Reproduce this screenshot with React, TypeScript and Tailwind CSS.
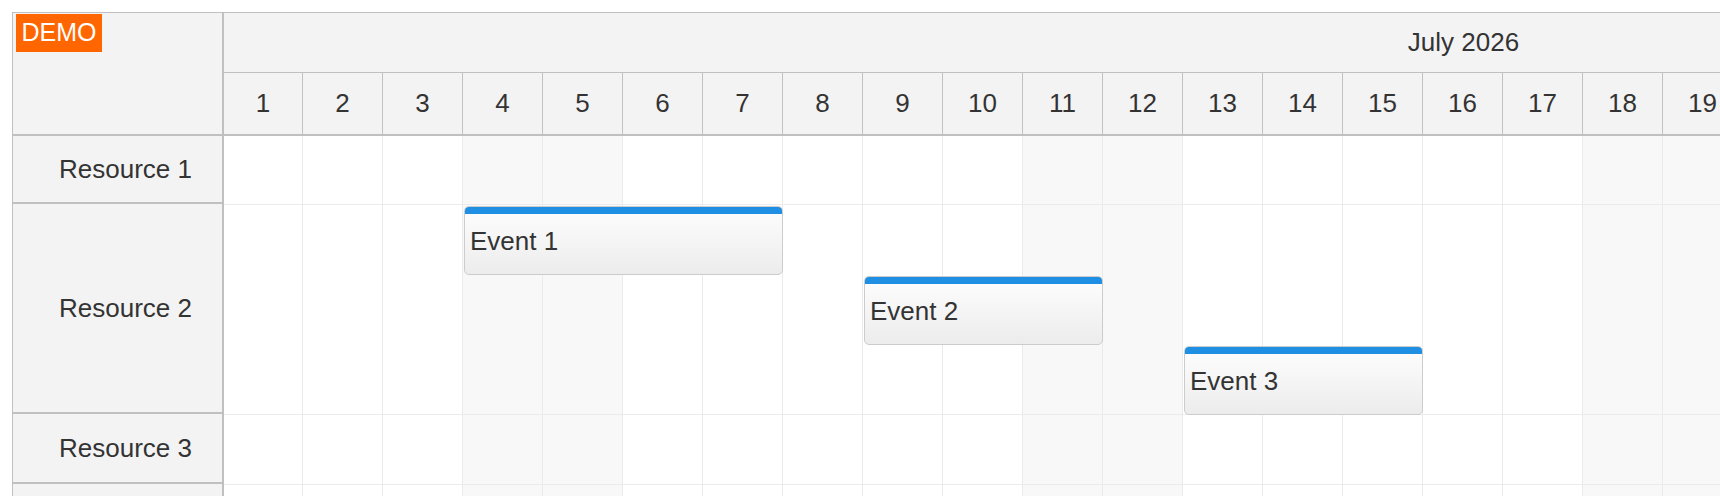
import type { CSSProperties } from "react";

type Resource = { name: string; headerH: string; rowH: string };
type SchedulerEvent = { text: string; start: number; days: number; lane: number };

const DAYS = Array.from({ length: 31 }, (_, i) => i + 1);
// Saturdays and Sundays in July 2026
const WEEKEND = new Set([4, 5, 11, 12, 18, 19, 25, 26]);

const RESOURCES: Resource[] = [
  { name: "Resource 1", headerH: "h-[68px]", rowH: "h-[69px]" },
  { name: "Resource 2", headerH: "h-[210px]", rowH: "h-[210px]" },
  { name: "Resource 3", headerH: "h-[70px]", rowH: "h-[70px]" },
  { name: "Resource 4", headerH: "h-[70px]", rowH: "h-[70px]" },
];

const EVENTS: SchedulerEvent[] = [
  { text: "Event 1", start: 4, days: 4, lane: 0 },
  { text: "Event 2", start: 9, days: 3, lane: 1 },
  { text: "Event 3", start: 13, days: 3, lane: 2 },
];

const CELL_W = 80;
const LANE_H = 70;
// top of Resource 2 inside the grid body (row 1 height)
const ROW2_TOP = 69;

const font = "font-['Liberation_Sans',Arial,sans-serif]";

function EventBox({ ev }: { ev: SchedulerEvent }) {
  const style: CSSProperties = {
    left: (ev.start - 1) * CELL_W,
    width: ev.days * CELL_W - 1,
    top: ROW2_TOP + 1 + ev.lane * LANE_H,
  };
  return (
    <div
      style={style}
      className="absolute z-10 flex h-[69px] items-center overflow-hidden rounded-[5px] border border-[#cccccc] bg-gradient-to-b from-[#fefefe] to-[#ececec] pl-[5px] text-[26px] text-[#333]"
    >
      <div className="absolute top-0 right-0 left-0 h-[7px] bg-[#1f8fe3]" />
      <span className="pt-[2px]">{ev.text}</span>
    </div>
  );
}

function GridRow({ rowH }: { rowH: string }) {
  return (
    <div className={`${rowH} grid grid-cols-[79px_repeat(30,80px)] border-b border-[#ebebeb]`}>
      {DAYS.map((d) => (
        <div
          key={d}
          className={`h-full border-r border-[#ebebeb] ${WEEKEND.has(d) ? "bg-[#f8f8f8]" : "bg-white"}`}
        />
      ))}
    </div>
  );
}

export default function App() {
  return (
    <div className={`h-[496px] w-full overflow-hidden bg-white pt-3 pl-3 ${font}`}>
      <div className="flex border-t border-l border-[#c0c0c0] text-[#333]">
        {/* row headers */}
        <div className="w-[211px] shrink-0 border-r-2 border-[#c0c0c0] bg-[#f3f3f3]">
          <div className="h-[123px] border-b-2 border-[#c0c0c0] pt-px pl-[3px]">
            <div className="flex h-[38px] w-[86px] items-center justify-center bg-[#ff6600] text-[25px] text-white">
              DEMO
            </div>
          </div>
          {RESOURCES.map((r) => (
            <div
              key={r.name}
              className={`${r.headerH} flex items-center border-b-2 border-[#c0c0c0] pl-[46px] text-[26px]`}
            >
              {r.name}
            </div>
          ))}
        </div>

        {/* timeline */}
        <div className="shrink-0">
          <div className="flex h-[60px] w-[2479px] items-center justify-center border-b border-[#c0c0c0] bg-[#f3f3f3] text-[26px]">
            July 2026
          </div>
          <div className="grid h-[63px] grid-cols-[79px_repeat(30,80px)] border-b-2 border-[#c0c0c0] bg-[#f3f3f3]">
            {DAYS.map((d) => (
              <div key={d} className="flex items-center justify-center border-r border-[#c0c0c0] text-[26px]">
                {d}
              </div>
            ))}
          </div>
          <div className="relative">
            {RESOURCES.map((r) => (
              <GridRow key={r.name} rowH={r.rowH} />
            ))}
            {EVENTS.map((ev) => (
              <EventBox key={ev.text} ev={ev} />
            ))}
          </div>
        </div>
      </div>
    </div>
  );
}
